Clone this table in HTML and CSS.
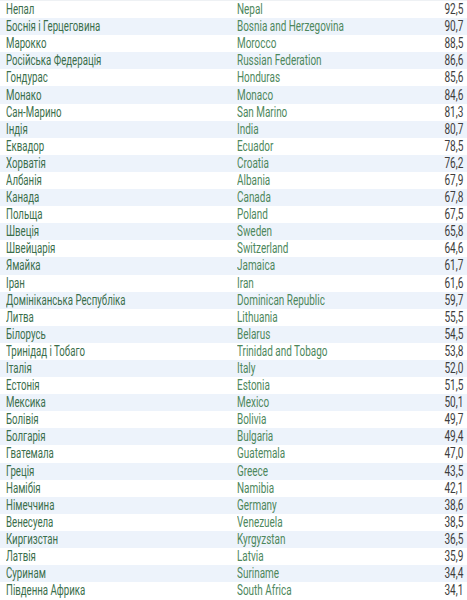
FILE: index.html
```html
<!DOCTYPE html>
<html lang="uk">
<head>
    <meta charset="UTF-8">
    <meta name="viewport" content="width=device-width, initial-scale=1.0">
    <title>Індекс</title>
    <link rel="stylesheet" href="styles.css">
</head>
<body>
    <div class="table">
        <div class="row"><span class="uk">Непал</span><span class="en">Nepal</span><span class="num">92,5</span></div>
        <div class="row"><span class="uk">Боснія і Герцеговина</span><span class="en">Bosnia and Herzegovina</span><span class="num">90,7</span></div>
        <div class="row"><span class="uk">Марокко</span><span class="en">Morocco</span><span class="num">88,5</span></div>
        <div class="row"><span class="uk">Російська Федерація</span><span class="en">Russian Federation</span><span class="num">86,6</span></div>
        <div class="row"><span class="uk">Гондурас</span><span class="en">Honduras</span><span class="num">85,6</span></div>
        <div class="row"><span class="uk">Монако</span><span class="en">Monaco</span><span class="num">84,6</span></div>
        <div class="row"><span class="uk">Сан-Марино</span><span class="en">San Marino</span><span class="num">81,3</span></div>
        <div class="row"><span class="uk">Індія</span><span class="en">India</span><span class="num">80,7</span></div>
        <div class="row"><span class="uk">Еквадор</span><span class="en">Ecuador</span><span class="num">78,5</span></div>
        <div class="row"><span class="uk">Хорватія</span><span class="en">Croatia</span><span class="num">76,2</span></div>
        <div class="row"><span class="uk">Албанія</span><span class="en">Albania</span><span class="num">67,9</span></div>
        <div class="row"><span class="uk">Канада</span><span class="en">Canada</span><span class="num">67,8</span></div>
        <div class="row"><span class="uk">Польща</span><span class="en">Poland</span><span class="num">67,5</span></div>
        <div class="row"><span class="uk">Швеція</span><span class="en">Sweden</span><span class="num">65,8</span></div>
        <div class="row"><span class="uk">Швейцарія</span><span class="en">Switzerland</span><span class="num">64,6</span></div>
        <div class="row"><span class="uk">Ямайка</span><span class="en">Jamaica</span><span class="num">61,7</span></div>
        <div class="row"><span class="uk">Іран</span><span class="en">Iran</span><span class="num">61,6</span></div>
        <div class="row"><span class="uk">Домініканська Республіка</span><span class="en">Dominican Republic</span><span class="num">59,7</span></div>
        <div class="row"><span class="uk">Литва</span><span class="en">Lithuania</span><span class="num">55,5</span></div>
        <div class="row"><span class="uk">Білорусь</span><span class="en">Belarus</span><span class="num">54,5</span></div>
        <div class="row"><span class="uk">Тринідад і Тобаго</span><span class="en">Trinidad and Tobago</span><span class="num">53,8</span></div>
        <div class="row"><span class="uk">Італія</span><span class="en">Italy</span><span class="num">52,0</span></div>
        <div class="row"><span class="uk">Естонія</span><span class="en">Estonia</span><span class="num">51,5</span></div>
        <div class="row"><span class="uk">Мексика</span><span class="en">Mexico</span><span class="num">50,1</span></div>
        <div class="row"><span class="uk">Болівія</span><span class="en">Bolivia</span><span class="num">49,7</span></div>
        <div class="row"><span class="uk">Болгарія</span><span class="en">Bulgaria</span><span class="num">49,4</span></div>
        <div class="row"><span class="uk">Гватемала</span><span class="en">Guatemala</span><span class="num">47,0</span></div>
        <div class="row"><span class="uk">Греція</span><span class="en">Greece</span><span class="num">43,5</span></div>
        <div class="row"><span class="uk">Намібія</span><span class="en">Namibia</span><span class="num">42,1</span></div>
        <div class="row"><span class="uk">Німеччина</span><span class="en">Germany</span><span class="num">38,6</span></div>
        <div class="row"><span class="uk">Венесуела</span><span class="en">Venezuela</span><span class="num">38,5</span></div>
        <div class="row"><span class="uk">Киргизстан</span><span class="en">Kyrgyzstan</span><span class="num">36,5</span></div>
        <div class="row"><span class="uk">Латвія</span><span class="en">Latvia</span><span class="num">35,9</span></div>
        <div class="row"><span class="uk">Суринам</span><span class="en">Suriname</span><span class="num">34,4</span></div>
        <div class="row"><span class="uk">Південна Африка</span><span class="en">South Africa</span><span class="num">34,1</span></div>
    </div>
</body>
</html>
```

FILE: styles.css
```css
body {
    margin: 0;
    background: #fff;
    font-family: Roboto, "Liberation Sans", sans-serif;
    font-size: 14px;
    overflow: hidden;
}

.table {
    border-top: 1px solid #eef1f4;
}

.row {
    display: grid;
    grid-template-columns: 231px 1fr auto;
    align-items: center;
    height: 17.1px;
    padding: 0 4px 0 6px;
    line-height: 17px;
    white-space: nowrap;
}

.row:nth-child(even) {
    background: #edf3fb;
}

/* condensed look: the face itself isn't installed */
.uk,
.en,
.num {
    display: inline-block;
    justify-self: start;
    transform: scaleX(0.69);
    transform-origin: left center;
}

.en {
    transform: scaleX(0.71);
    color: #4d875c;
}

.uk {
    color: #3a6e4b;
}

.num {
    justify-self: end;
    transform: scaleX(0.72);
    transform-origin: right center;
    color: #3d3d3d;
}
```
